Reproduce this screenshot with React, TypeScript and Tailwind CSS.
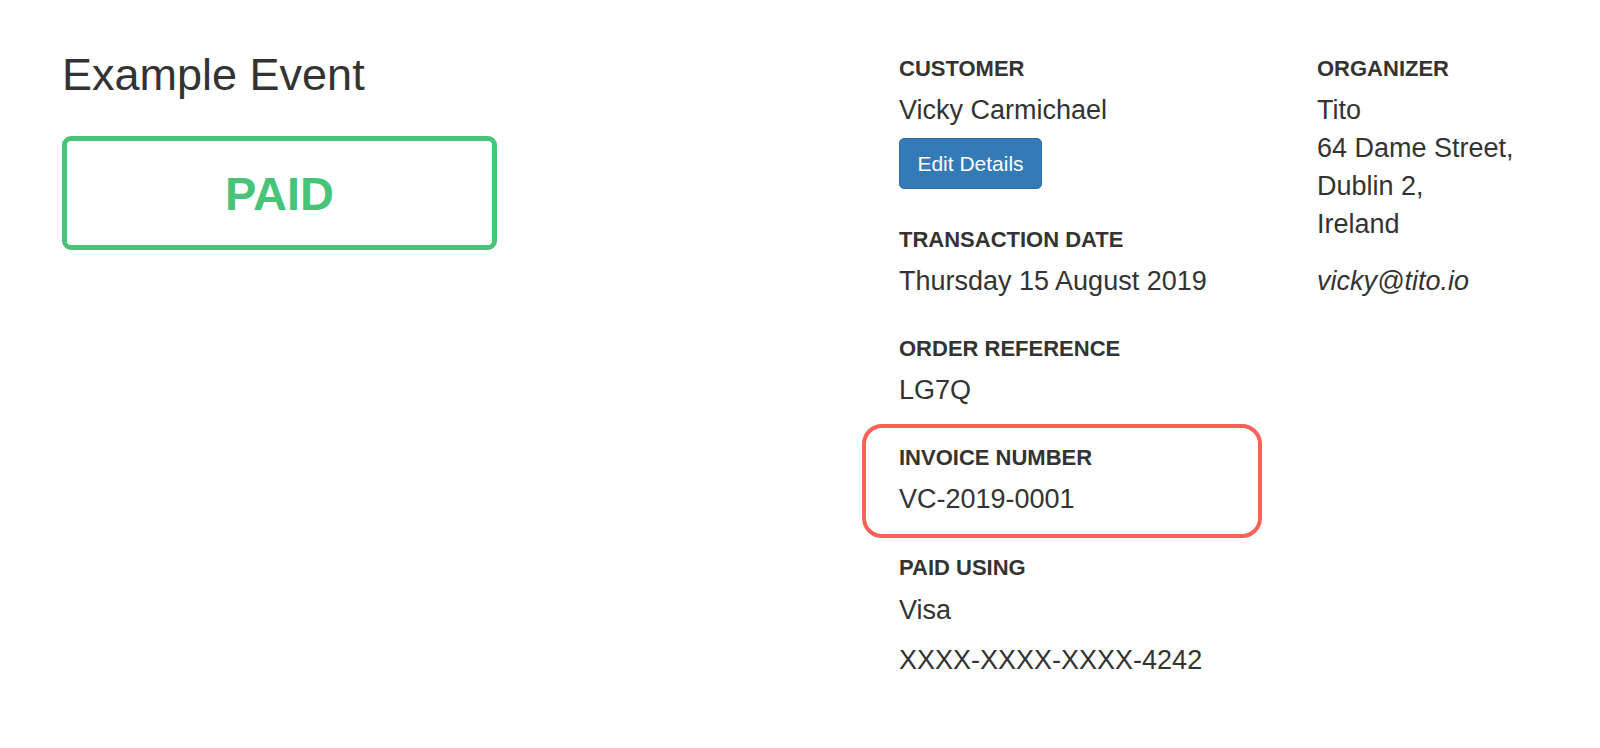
import React from "react";

const label = "text-[22px] leading-[32px] font-bold text-[#333] uppercase";
const value = "text-[27px] leading-[38px] text-[#333]";

export default function App() {
  return (
    <div className="min-h-[748px] w-full bg-white font-['Liberation_Sans',Arial,sans-serif] text-[#333]">
      <div className="flex items-start pl-[62px]">
        {/* Left column */}
        <div className="w-[837px] shrink-0 pt-[50px]">
          <h1 className="text-[45px] leading-[50px] font-normal text-[#333]">Example Event</h1>
          <div className="mt-[36px] flex h-[114px] w-[435px] items-center justify-center rounded-[9px] border-[5px] border-[#48c479]">
            <span className="text-[47px] leading-[47px] font-bold text-[#48c479]">PAID</span>
          </div>
        </div>

        {/* Middle column */}
        <div className="w-[418px] shrink-0 pt-[53px]">
          <div>
            <div className={label}>Customer</div>
            <div className={`${value} mt-[6px]`}>Vicky Carmichael</div>
            <button className="mt-[9px] flex h-[51px] w-[143px] items-center justify-center rounded-[5px] border border-[#2e6da4] bg-[#337ab7] text-[21px] text-white">
              Edit Details
            </button>
          </div>

          <div className="mt-[35px]">
            <div className={label}>Transaction Date</div>
            <div className={`${value} mt-[6px]`}>Thursday 15 August 2019</div>
          </div>

          <div className="mt-[33px]">
            <div className={label}>Order Reference</div>
            <div className={`${value} mt-[6px]`}>LG7Q</div>
          </div>

          <div className="relative mt-[33px]">
            <div className={label}>Invoice Number</div>
            <div className={`${value} mt-[6px]`}>VC-2019-0001</div>
            <div className="pointer-events-none absolute -top-[18px] -bottom-[20px] -left-[37px] w-[400px] rounded-[20px] border-[4px] border-[#fa6158]" />
          </div>

          <div className="mt-[34px]">
            <div className={label}>Paid Using</div>
            <div className={`${value} mt-[7px]`}>Visa</div>
            <div className={`${value} mt-[12px]`}>XXXX-XXXX-XXXX-4242</div>
          </div>
        </div>

        {/* Right column */}
        <div className="flex-1 pt-[53px]">
          <div className={label}>Organizer</div>
          <div className={`${value} mt-[6px]`}>
            <div>Tito</div>
            <div>64 Dame Street,</div>
            <div>Dublin 2,</div>
            <div>Ireland</div>
          </div>
          <div className={`${value} mt-[19px] italic`}>vicky@tito.io</div>
        </div>
      </div>
    </div>
  );
}
